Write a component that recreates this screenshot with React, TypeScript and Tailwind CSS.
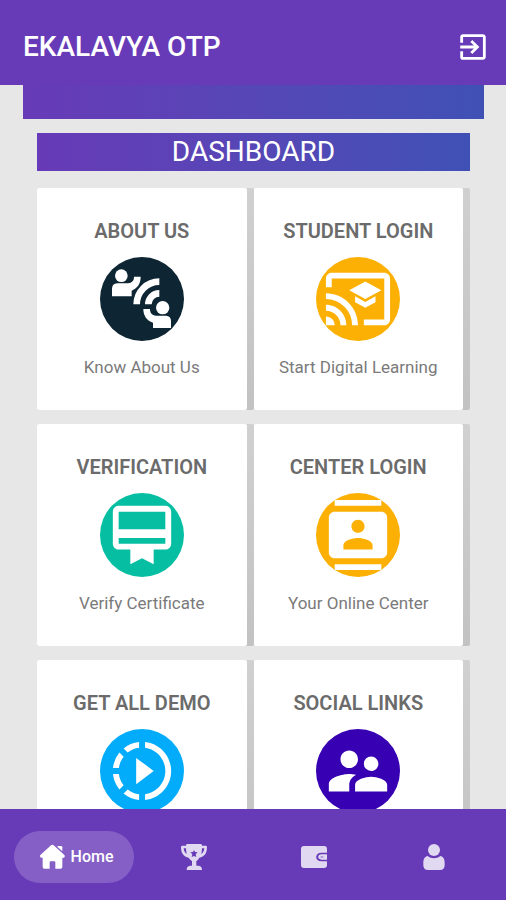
import { ReactNode } from 'react'
import {
  MdCardMembership,
  MdCastForEducation,
  MdContacts,
  MdExitToApp,
  MdSlowMotionVideo,
  MdSupervisorAccount,
} from 'react-icons/md'

interface DashboardItem {
  title: string
  caption?: string
  icon: ReactNode
  color: string
}

function ContactIcon() {
  return (
    <svg viewBox="0 0 216 216" className="size-[72px]" fill="currentColor" aria-hidden="true">
      <circle cx="46" cy="38" r="19" />
      <path d="M18 100V78q0-16 16-17h32c12-2 18-8 18-20h20c0 20-8 33-27 42v17Z" />
      <path d="M160 56a68 68 0 0 0-68 68M160 91a33 33 0 0 0-33 33" fill="none" stroke="currentColor" strokeWidth="20" />
      <circle cx="170" cy="134" r="20" />
      <path d="M112 138h20c0 13 6 19 18 20h30q15 1 15 16v21h-54v-16c-18-6-29-20-29-41Z" />
    </svg>
  )
}

const items: DashboardItem[] = [
  { title: 'ABOUT US', caption: 'Know About Us', icon: <ContactIcon />, color: 'bg-[#0e2633]' },
  { title: 'STUDENT LOGIN', caption: 'Start Digital Learning', icon: <MdCastForEducation />, color: 'bg-[#fbb003]' },
  { title: 'VERIFICATION', caption: 'Verify Certificate', icon: <MdCardMembership />, color: 'bg-[#06bfa2]' },
  { title: 'CENTER LOGIN', caption: 'Your Online Center', icon: <MdContacts />, color: 'bg-[#fbb003]' },
  { title: 'GET ALL DEMO', icon: <MdSlowMotionVideo />, color: 'bg-[#03acfb]' },
  { title: 'SOCIAL LINKS', icon: <MdSupervisorAccount />, color: 'bg-[#3700b3]' },
]

function DashboardCard({ title, caption, icon, color }: DashboardItem) {
  return (
    <div className="h-[222px] rounded-xs bg-linear-to-b from-[#d0d0d0] to-[#c2c2c2] pr-[7px]">
      <a href="#" className="flex h-full flex-col items-center rounded-xs bg-white pt-[31px]">
        <span className="text-[20px] leading-6 font-semibold text-[#6b6b6b]">{title}</span>
        <span
          className={`mt-[14px] flex size-[84px] shrink-0 items-center justify-center overflow-hidden rounded-full text-[70px] text-white ${color}`}
        >
          {icon}
        </span>
        {caption && <span className="mt-[14px] text-[17px] leading-6 text-[#7a7a7a]">{caption}</span>}
      </a>
    </div>
  )
}

function HomeIcon() {
  return (
    <svg viewBox="0 0 78 78" className="size-[26px]" fill="currentColor" aria-hidden="true">
      <path d="M36 4q4-3 8 0l32 29q3 4-1 8h-5v28q0 5-5 5H49V55q0-3-3-3H35q-3 0-3 3v19H16q-5 0-5-5V41H6q-6-4-1-9Z" />
      <path d="M56 6h10q4 0 4 4v12L55 8Z" />
    </svg>
  )
}

function TrophyIcon() {
  return (
    <svg viewBox="0 0 78 78" className="size-[26px]" fill="currentColor" aria-hidden="true">
      <path
        fillRule="evenodd"
        d="M18 0h42q3 0 3 5h11q4 0 4 4c0 20-8 29-23 32-4 6-5 8-9 10v14h7q10 1 10 13H17q0-12 10-13h6V51c-4-2-6-5-10-10C8 38 0 28 0 9q0-4 4-4h11q0-5 3-5ZM8 13c1 9 4 14 9 17-1-5-2-11-2-17ZM70 13h-7c0 6-1 12-2 17 5-3 8-8 9-17ZM39 18l-3 6-8 1 6 6-2 8 7-3 7 3-2-8 6-6-8-1Z"
      />
    </svg>
  )
}

function WalletIcon() {
  return (
    <svg viewBox="0 0 78 78" className="size-[26px]" fill="currentColor" aria-hidden="true">
      <path d="M9 6h60q9 0 9 9v11H62c-22 0-22 26 0 26h16v11q0 9-9 9H9q-9 0-9-9V15q0-9 9-9Z" />
      <path d="M62 31h16v16H62c-14 0-14-16 0-16Z" />
      <path d="M62 36h5v6h-5c-5 0-5-6 0-6Z" className="fill-[#673ab7]/40" />
    </svg>
  )
}

function ProfileIcon() {
  return (
    <svg viewBox="0 0 78 78" className="size-[26px]" fill="currentColor" aria-hidden="true">
      <circle cx="39" cy="18" r="18" />
      <path d="M20 36c11 9 27 9 38 0 8 1 13 9 13 20v8q0 14-14 14H21Q7 78 7 64v-8c0-11 5-19 13-20Z" />
    </svg>
  )
}

export default function App() {
  return (
    <div className="flex h-screen flex-col bg-[#e7e7e7] font-[Roboto,sans-serif]">
      <header className="flex h-[85px] shrink-0 items-center justify-between bg-[#673ab7] pt-2 pr-4 pl-[23px] text-white">
        <h1 className="text-[28px] leading-8 font-medium">EKALAVYA OTP</h1>
        <button type="button" aria-label="Log out" className="text-[34px]">
          <MdExitToApp />
        </button>
      </header>

      <main className="min-h-0 flex-1 overflow-hidden">
        <div className="mr-[22px] ml-[23px] h-[34px] bg-linear-to-r from-[#673ab7] to-[#3f51b5]" />
        <div className="pr-9 pl-[37px]">
          <h2 className="mt-[14px] bg-linear-to-r from-[#673ab7] to-[#3f51b5] text-center text-[28px] leading-[38px] text-white">
            DASHBOARD
          </h2>
          <div className="mt-[17px] grid grid-cols-2 gap-y-[14px]">
            {items.map((item) => (
              <DashboardCard key={item.title} {...item} />
            ))}
          </div>
        </div>
      </main>

      <nav className="grid h-[91px] shrink-0 grid-cols-4 items-center bg-[#673ab7] pt-1 pr-3 pl-[14px] text-[#e1d8f1]">
        <a
          href="#"
          className="flex h-[52px] items-center justify-center gap-[6px] rounded-full bg-[#855fc5] pl-1 text-white"
        >
          <HomeIcon />
          <span className="text-[16px] leading-5 font-medium">Home</span>
        </a>
        <a href="#" aria-label="Achievements" className="flex justify-center">
          <TrophyIcon />
        </a>
        <a href="#" aria-label="Wallet" className="flex justify-center">
          <WalletIcon />
        </a>
        <a href="#" aria-label="Profile" className="flex justify-center">
          <ProfileIcon />
        </a>
      </nav>
    </div>
  )
}
